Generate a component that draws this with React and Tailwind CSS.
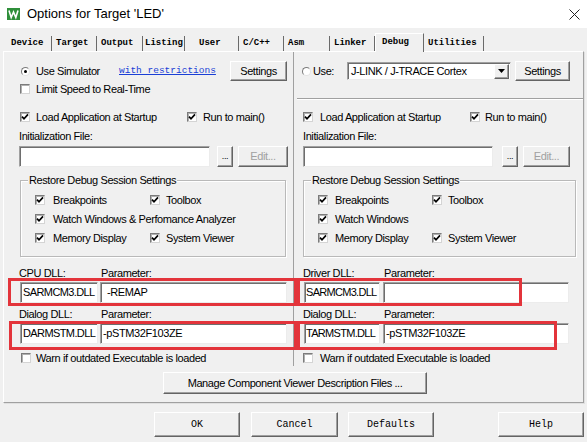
import React from "react";

const sans = "font-['Liberation_Sans',Arial,sans-serif]";
const mono = "font-['Liberation_Mono','Courier_New',monospace]";

function Check({ on = true }) {
  return (
    <span className="w-[10px] h-[10px] shrink-0 bg-white border border-t-[#7b7b7b] border-l-[#7b7b7b] border-r-[#d4d4d4] border-b-[#d4d4d4] shadow-[inset_1px_1px_0_#b0b0b0] flex items-center justify-center">
      {on && (
        <svg width="8" height="8" viewBox="0 0 8 8">
          <path d="M1 3.6 L3 5.8 L7 1.4" fill="none" stroke="#000" strokeWidth="1.7" />
        </svg>
      )}
    </span>
  );
}

function Radio({ on }) {
  return (
    <span className="w-[9px] h-[9px] shrink-0 rounded-full bg-white border border-t-[#7b7b7b] border-l-[#7b7b7b] border-r-[#e4e4e4] border-b-[#e4e4e4] flex items-center justify-center">
      {on && <span className="w-[3px] h-[3px] rounded-full bg-black" />}
    </span>
  );
}

function Btn({ className = "", disabled, children }) {
  return (
    <div
      className={`shrink-0 flex items-center justify-center bg-[#f0f0f0] border border-t-white border-l-white border-r-[#646464] border-b-[#646464] shadow-[inset_-1px_-1px_0_#a0a0a0] whitespace-nowrap ${
        disabled ? "text-[#a0a0a0]" : ""
      } ${className}`}
    >
      {children}
    </div>
  );
}

function Field({ className = "", children }) {
  return (
    <div
      className={`shrink-0 bg-white border border-t-[#a0a0a0] border-l-[#a0a0a0] border-r-[#ececec] border-b-[#ececec] shadow-[inset_1px_1px_0_#6e6e6e] flex items-center pl-[2px] whitespace-nowrap overflow-hidden ${className}`}
    >
      {children}
    </div>
  );
}

function Group({ className = "", toolGap, watch }) {
  return (
    <div className={`relative h-[77px] border border-[#b9b9b9] shadow-[inset_1px_1px_0_#fff,1px_1px_0_#fff] pt-[11px] ${className}`}>
      <span className="absolute -top-[8px] left-[7px] bg-[#f0f0f0] px-[1px] leading-[15px]">
        Restore Debug Session Settings
      </span>
      <div className="flex flex-col gap-[3px] pl-[14px]">
        <div className="flex items-center h-[16px]">
          <Check />
          <span className={`${toolGap} w-[97px]`}>Breakpoints</span>
          <Check />
          <span className="ml-[6px]">Toolbox</span>
        </div>
        <div className="flex items-center h-[16px]">
          <Check />
          <span className={toolGap}>{watch}</span>
        </div>
        <div className="flex items-center h-[16px]">
          <Check />
          <span className={`${toolGap} w-[97px]`}>Memory Display</span>
          <Check />
          <span className="ml-[6px]">System Viewer</span>
        </div>
      </div>
    </div>
  );
}

function RedBox({ className }) {
  return <div className={`absolute border-[3px] border-[#e3343b] pointer-events-none ${className}`} />;
}

const tabs = [
  { label: "Device", w: "w-[45px]" },
  { label: "Target", w: "w-[45px]" },
  { label: "Output", w: "w-[46px]" },
  { label: "Listing", w: "w-[42px]", pad: "pl-[2px]" },
  { label: "User", w: "w-[54px]", pad: "pl-[14px]" },
  { label: "C/C++", w: "w-[45px]" },
  { label: "Asm", w: "w-[46px]" },
  { label: "Linker", w: "w-[45px]" },
  { label: "Debug", w: "w-[49px]", active: true },
  { label: "Utilities", w: "w-[60px]" },
];

export default function App() {
  return (
    <div className={`relative w-[587px] h-[442px] bg-[#f0f0f0] overflow-hidden text-[11px] tracking-[-0.4px] text-black ${sans}`}>
      {/* title bar */}
      <div className="h-[28px] bg-white flex items-center pl-[7px] pr-[5px]">
        <svg width="13" height="12" viewBox="0 0 13 12" className="shrink-0 -mt-[1px]">
          <rect width="13" height="12" fill="#2f8f3a" />
          <path d="M2 2.5 L4.2 9.5 L6.5 4 L8.8 9.5 L11 2.5" fill="none" stroke="#fff" strokeWidth="1.6" />
        </svg>
        <span className="ml-[7px] text-[13px] tracking-normal">Options for Target 'LED'</span>
        <svg width="11" height="11" viewBox="0 0 11 11" className="ml-auto mr-[2px]">
          <path d="M0.5 0.5 L10.5 10.5 M10.5 0.5 L0.5 10.5" stroke="#222" strokeWidth="1" />
        </svg>
      </div>

      {/* tabs */}
      <div className={`h-[23px] flex items-end pl-[7px] text-[9px] font-bold tracking-normal ${mono}`}>
        {tabs.map((t) =>
          t.active ? (
            <div
              key={t.label}
              className={`${t.w} relative z-10 -mb-px h-[19px] bg-[#f0f0f0] border-l border-t border-white border-r border-r-[#6a6a6a] pl-[6px] flex items-center pb-[1px]`}
            >
              {t.label}
            </div>
          ) : (
            <div
              key={t.label}
              className={`${t.w} h-[15px] border-r border-r-[#6a6a6a] ${t.pad || "pl-[4px]"} flex items-center`}
            >
              {t.label}
            </div>
          )
        )}
      </div>

      {/* panel */}
      <div className="ml-[3px] w-[581px] h-[352px] border border-[#a0a0a0] border-t-white border-l-white shadow-[1px_1px_0_#e0e0e0]">
        <div className="flex">
          {/* left column */}
          <div className="w-[289px] shrink-0 pt-[9px] pl-[15px]">
            <div className="flex items-center h-[20px]">
              <span className="ml-[2px] flex">
                <Radio on />
              </span>
              <span className="ml-[6px] w-[83px]">Use Simulator</span>
              <span className={`w-[111px] text-[9.5px] tracking-normal text-[#1a3fd6] underline ${mono}`}>
                with restrictions
              </span>
              <Btn className="w-[57px] h-[20px]">Settings</Btn>
            </div>
            <div className="flex items-center h-[16px]">
              <span className="ml-[1px] flex">
                <Check on={false} />
              </span>
              <span className="ml-[6px]">Limit Speed to Real-Time</span>
            </div>
            <div className="flex items-center h-[16px] mt-[12px]">
              <span className="ml-[1px] flex">
                <Check />
              </span>
              <span className="ml-[6px] w-[151px]">Load Application at Startup</span>
              <Check />
              <span className="ml-[6px]">Run to main()</span>
            </div>
            <div className="h-[16px] mt-[3px] flex items-center">Initialization File:</div>
            <div className="flex h-[21px] mt-[2px]">
              <Field className="w-[191px]" />
              <Btn className="ml-[7px] w-[16px] text-[9px] items-end pb-[3px]">...</Btn>
              <Btn disabled className="ml-[5px] w-[50px]">
                Edit...
              </Btn>
            </div>
            <Group className="mt-[13px] ml-[1px] w-[266px]" toolGap="ml-[8px]" watch="Watch Windows & Perfomance Analyzer" />
            <div className="flex items-center h-[16px] mt-[8px]">
              <span className="w-[82px]">CPU DLL:</span>
              <span>Parameter:</span>
            </div>
            <div className="flex h-[21px] mt-[1px]">
              <Field className="ml-[1px] w-[78px] tracking-[-0.6px]">SARMCM3.DLL</Field>
              <Field className="ml-[2px] w-[187px]">
                <span className="ml-[4px]">-REMAP</span>
              </Field>
            </div>
            <div className="flex items-center h-[16px] mt-[3px]">
              <span className="w-[82px]">Dialog DLL:</span>
              <span>Parameter:</span>
            </div>
            <div className="flex h-[21px] mt-[1px]">
              <Field className="ml-[1px] w-[78px] tracking-[-0.6px]">DARMSTM.DLL</Field>
              <Field className="ml-[2px] w-[187px]">-pSTM32F103ZE</Field>
            </div>
            <div className="flex items-center h-[16px] mt-[6px]">
              <span className="ml-[2px] flex">
                <Check on={false} />
              </span>
              <span className="ml-[5px]">Warn if outdated Executable is loaded</span>
            </div>
          </div>

          {/* right column */}
          <div className="w-[290px] shrink-0 border-l border-[#a0a0a0] pt-[9px] pl-[9px]">
            <div className="flex items-center h-[20px]">
              <span className="-ml-px flex">
                <Radio />
              </span>
              <span className="ml-[2px] w-[34px]">Use:</span>
              <div className="w-[164px] h-[18px] bg-white border border-t-[#a0a0a0] border-l-[#a0a0a0] border-r-[#ececec] border-b-[#ececec] shadow-[inset_1px_1px_0_#6e6e6e] flex items-center pl-[3px]">
                <span className="flex-1">J-LINK / J-TRACE Cortex</span>
                <Btn className="w-[15px] h-[15px] mr-px">
                  <svg width="7" height="4" viewBox="0 0 7 4">
                    <path d="M0 0 H7 L3.5 4 Z" fill="#000" />
                  </svg>
                </Btn>
              </div>
              <Btn className="ml-[4px] w-[55px] h-[20px]">Settings</Btn>
            </div>
            <div className="-ml-[6px] w-[286px] h-[2px] mt-[17px] border-t border-[#a0a0a0] border-b border-b-white" />
            <div className="flex items-center h-[16px] mt-[9px]">
              <Check />
              <span className="ml-[7px] w-[150px]">Load Application at Startup</span>
              <Check />
              <span className="ml-[5px]">Run to main()</span>
            </div>
            <div className="h-[16px] mt-[3px] flex items-center">Initialization File:</div>
            <div className="flex h-[21px] mt-[2px]">
              <Field className="w-[190px]" />
              <Btn className="ml-[9px] w-[16px] text-[9px] items-end pb-[3px]">...</Btn>
              <Btn disabled className="ml-[5px] w-[47px]">
                Edit...
              </Btn>
            </div>
            <Group className="mt-[13px] w-[273px]" toolGap="ml-[7px]" watch="Watch Windows" />
            <div className="flex items-center h-[16px] mt-[8px]">
              <span className="w-[81px]">Driver DLL:</span>
              <span>Parameter:</span>
            </div>
            <div className="flex h-[21px] mt-[1px]">
              <Field className="ml-[1px] w-[76px] pl-px tracking-[-0.7px]">SARMCM3.DLL</Field>
              <Field className="ml-[3px] w-[186px]" />
            </div>
            <div className="flex items-center h-[16px] mt-[3px]">
              <span className="w-[81px]">Dialog DLL:</span>
              <span>Parameter:</span>
            </div>
            <div className="flex h-[21px] mt-[1px]">
              <Field className="ml-[1px] w-[76px] pl-px tracking-[-0.7px]">TARMSTM.DLL</Field>
              <Field className="ml-[3px] w-[186px]">-pSTM32F103ZE</Field>
            </div>
            <div className="flex items-center h-[16px] mt-[6px]">
              <Check on={false} />
              <span className="ml-[7px]">Warn if outdated Executable is loaded</span>
            </div>
          </div>
        </div>

        <Btn className="ml-[159px] mt-[6px] w-[264px] h-[22px]">Manage Component Viewer Description Files ...</Btn>
      </div>

      {/* dialog buttons */}
      <div className={`flex mt-[9px] pl-[154px] text-[10px] tracking-normal ${mono}`}>
        <Btn className="w-[86px] h-[25px]">OK</Btn>
        <Btn className="ml-[11px] w-[87px] h-[25px]">Cancel</Btn>
        <Btn className="ml-[10px] w-[86px] h-[25px]">Defaults</Btn>
        <Btn className="ml-[64px] w-[86px] h-[25px]">Help</Btn>
      </div>

      {/* red annotation frames */}
      <RedBox className="left-[8px] top-[278px] w-[289px] h-[28px]" />
      <RedBox className="left-[9px] top-[321px] w-[288px] h-[29px]" />
      <RedBox className="left-[297px] top-[278px] w-[225px] h-[28px]" />
      <RedBox className="left-[297px] top-[321px] w-[260px] h-[29px]" />
    </div>
  );
}
